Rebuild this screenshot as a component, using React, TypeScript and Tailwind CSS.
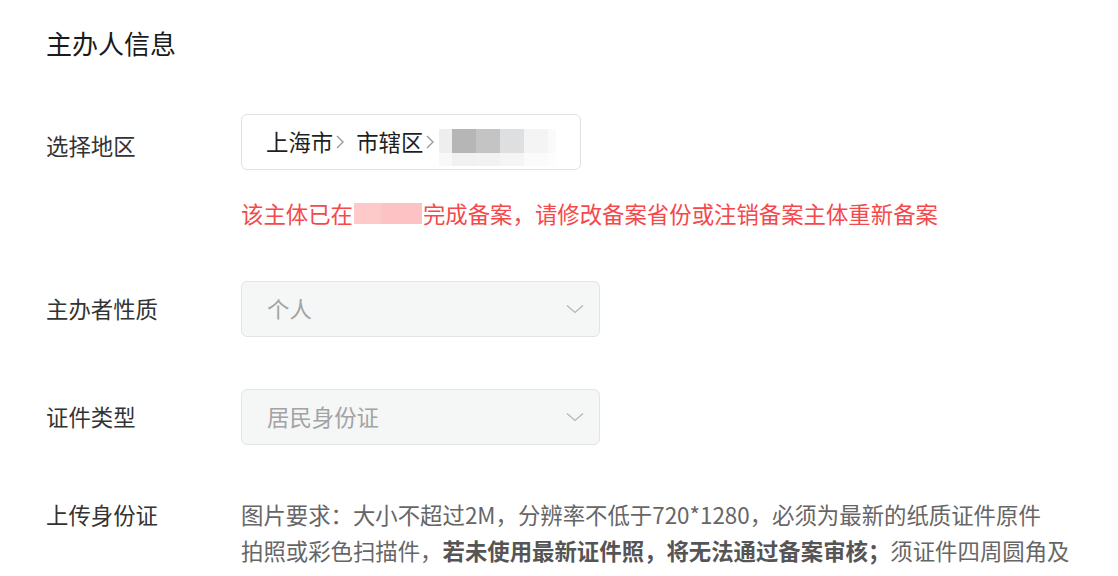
import React from "react";

const font = { fontFamily: '"Noto Sans CJK SC", "Noto Sans", sans-serif' };

function Chevron() {
  return (
    <svg width="10" height="18" viewBox="0 0 10 18" className="mx-[2px] shrink-0">
      <path d="M2 3 L8 9 L2 15" fill="none" stroke="#9a9a9a" strokeWidth="1.4" />
    </svg>
  );
}

function Down() {
  return (
    <svg width="18" height="10" viewBox="0 0 18 10" className="shrink-0">
      <path d="M1 1.5 L9 8.5 L17 1.5" fill="none" stroke="#b5b5b5" strokeWidth="1.2" />
    </svg>
  );
}

function Select({ text }: { text: string }) {
  return (
    <div className="w-[359px] h-[56px] rounded-[6px] border border-[#e2e4e6] bg-[#f5f6f6] flex items-center justify-between pl-[25px] pr-[15px]">
      <span className="text-[#a3a3a3]">{text}</span>
      <Down />
    </div>
  );
}

export default function App() {
  return (
    <div className="w-[1118px] h-[576px] overflow-hidden bg-white text-[22.4px] text-[#333]" style={font}>
      <div className="pl-[46px]">
        <div className="pt-[25px] h-[61px] text-[26px] leading-[36px] text-[#1a1a1a]">主办人信息</div>

        <div className="flex mt-[53px]">
          <div className="w-[195px] leading-[62px]">选择地区</div>
          <div className="flex flex-col">
            <div className="w-[340px] h-[56px] rounded-[6px] border border-[#dfe1e4] bg-white flex items-center pl-[24px] text-[#1f1f1f]">
              <span>上海市</span>
              <Chevron />
              <span className="ml-[9px]">市辖区</span>
              <Chevron />
              <div className="flex flex-col ml-[2px] mt-[10px]">
                <div className="flex h-[24px]">
                  <div className="w-[13px] bg-[#eeeeee]" />
                  <div className="w-[24px] bg-[#b6b6b6]" />
                  <div className="w-[24px] bg-[#c4c4c4]" />
                  <div className="w-[24px] bg-[#dedfe0]" />
                  <div className="w-[24px] bg-[#f4f4f4]" />
                  <div className="w-[8px] bg-[#fafafa]" />
                </div>
                <div className="flex h-[13px]">
                  <div className="w-[13px] bg-[#f8f8f8]" />
                  <div className="w-[24px] bg-[#f1f1f1]" />
                  <div className="w-[24px] bg-[#f2f2f2]" />
                  <div className="w-[24px] bg-[#f5f5f5]" />
                  <div className="w-[24px] bg-[#fbfbfb]" />
                  <div className="w-[8px] bg-[#fdfdfd]" />
                </div>
              </div>
            </div>
            <div className="mt-[25px] leading-[36px] text-[#f5484b] flex items-center">
              <span>该主体已在</span>
              <span className="inline-flex h-[21px] mx-[1px]">
                <span className="w-[27px] bg-[#fdc9c9]" />
                <span className="w-[41px] bg-[#fdc3c4]" />
              </span>
              <span>完成备案，请修改备案省份或注销备案主体重新备案</span>
            </div>
          </div>
        </div>

        <div className="flex items-center mt-[50px]">
          <div className="w-[195px]">主办者性质</div>
          <Select text="个人" />
        </div>

        <div className="flex items-center mt-[52px]">
          <div className="w-[195px]">证件类型</div>
          <Select text="居民身份证" />
        </div>

        <div className="flex mt-[51px] leading-[36px]">
          <div className="w-[195px] shrink-0">上传身份证</div>
          <div className="text-[#666] whitespace-nowrap">
            图片要求：大小不超过2M，分辨率不低于720*1280，必须为最新的纸质证件原件
            <br />
            拍照或彩色扫描件，
            <span className="font-bold text-[#555]">若未使用最新证件照，将无法通过备案审核；</span>
            须证件四周圆角及
            <br />
            边框清晰可见，信息完整，不得有遮挡、反光或模糊等情况
          </div>
        </div>
      </div>
    </div>
  );
}
